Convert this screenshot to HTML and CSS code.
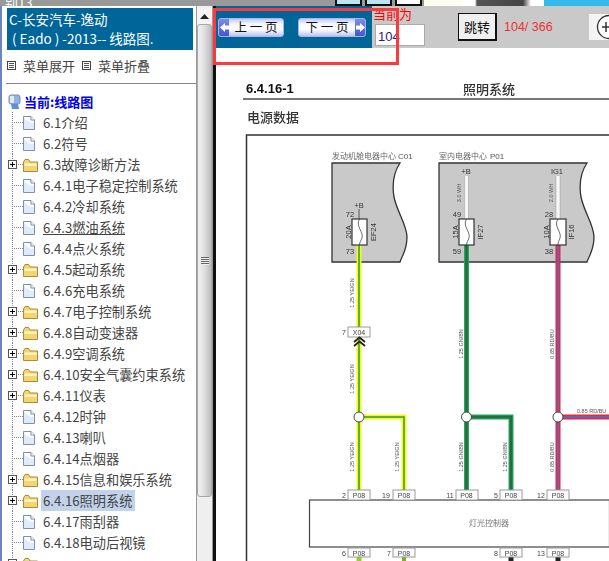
FILE: index.html
```html
<!DOCTYPE html>
<html lang="zh">
<head>
<meta charset="utf-8">
<title>线路图</title>
<link rel="stylesheet" href="styles.css">
</head>
<body>
<svg class="defs" width="0" height="0">
  <symbol id="doc" viewBox="0 0 12 14">
    <path d="M.5.5H8L11.5 4V13.5H.5Z" fill="#dfeafa" stroke="#7f8fae"/>
    <path d="M1 1H7.500V4.500H11V7C7 7 3 5 1 1Z" fill="#fff"/>
    <path d="M8 .5V4H11.500" fill="#fff" stroke="#7f8fae"/>
  </symbol>
  <symbol id="folder" viewBox="0 0 15 13">
    <path d="M.5 3V12.500H14.500V3H7L5.500 .5H2Z" fill="#f4d56f" stroke="#a88b3c"/>
    <path d="M1.500 4.500H13.500V7H1.500Z" fill="#fff3c0"/>
  </symbol>
</svg>

<div class="topstrip">
  <span class="old-title">别13</span>
  <span class="strip-win"></span>
  <span class="strip-win"></span>
  <span class="strip-win strip-win-white"></span>
  <span class="strip-cream"></span>
  <span class="strip-dark"></span>
  <span class="strip-white"></span>
  <span class="strip-cyan"></span>
</div>

<div class="main">
  <aside class="side">
    <div class="side-head">C-长安汽车-逸动<br>&nbsp;( Eado ) -2013-- 线路图.</div>
    <div class="menu-actions">
      <span class="action"><i class="action-box"></i>菜单展开</span>
      <span class="action"><i class="action-box"></i>菜单折叠</span>
    </div>
    <hr class="side-rule">
    <div class="root">
      <svg class="root-icon" width="13" height="16" viewBox="0 0 13 16">
        <rect x="1" y="1" width="11" height="9" rx="2" fill="#8fb4e4" stroke="#7a8fb0"/>
        <path d="M3 10H10L11 15H4Z" fill="#5c8fd6"/>
        <rect x="2" y="2" width="4" height="7" fill="#dfe8f5"/>
      </svg>
      <span>当前:线路图</span>
    </div>
    <ul class="tree">
      <li class="row"><span class="stem"></span><svg class="ic-doc"><use href="#doc"/></svg><span class="label">6.1介绍</span></li>
      <li class="row"><span class="stem"></span><svg class="ic-doc"><use href="#doc"/></svg><span class="label">6.2符号</span></li>
      <li class="row"><span class="stem"><i class="plus"></i></span><svg class="ic-folder"><use href="#folder"/></svg><span class="label">6.3故障诊断方法</span></li>
      <li class="row"><span class="stem"></span><svg class="ic-doc"><use href="#doc"/></svg><span class="label">6.4.1电子稳定控制系统</span></li>
      <li class="row"><span class="stem"></span><svg class="ic-doc"><use href="#doc"/></svg><span class="label">6.4.2冷却系统</span></li>
      <li class="row"><span class="stem"></span><svg class="ic-doc"><use href="#doc"/></svg><span class="label label-hover">6.4.3燃油系统</span></li>
      <li class="row"><span class="stem"></span><svg class="ic-doc"><use href="#doc"/></svg><span class="label">6.4.4点火系统</span></li>
      <li class="row"><span class="stem"><i class="plus"></i></span><svg class="ic-folder"><use href="#folder"/></svg><span class="label">6.4.5起动系统</span></li>
      <li class="row"><span class="stem"></span><svg class="ic-doc"><use href="#doc"/></svg><span class="label">6.4.6充电系统</span></li>
      <li class="row"><span class="stem"><i class="plus"></i></span><svg class="ic-folder"><use href="#folder"/></svg><span class="label">6.4.7电子控制系统</span></li>
      <li class="row"><span class="stem"><i class="plus"></i></span><svg class="ic-folder"><use href="#folder"/></svg><span class="label">6.4.8自动变速器</span></li>
      <li class="row"><span class="stem"><i class="plus"></i></span><svg class="ic-folder"><use href="#folder"/></svg><span class="label">6.4.9空调系统</span></li>
      <li class="row"><span class="stem"><i class="plus"></i></span><svg class="ic-folder"><use href="#folder"/></svg><span class="label">6.4.10安全气囊约束系统</span></li>
      <li class="row"><span class="stem"><i class="plus"></i></span><svg class="ic-folder"><use href="#folder"/></svg><span class="label">6.4.11仪表</span></li>
      <li class="row"><span class="stem"></span><svg class="ic-doc"><use href="#doc"/></svg><span class="label">6.4.12时钟</span></li>
      <li class="row"><span class="stem"></span><svg class="ic-doc"><use href="#doc"/></svg><span class="label">6.4.13喇叭</span></li>
      <li class="row"><span class="stem"></span><svg class="ic-doc"><use href="#doc"/></svg><span class="label">6.4.14点烟器</span></li>
      <li class="row"><span class="stem"><i class="plus"></i></span><svg class="ic-folder"><use href="#folder"/></svg><span class="label">6.4.15信息和娱乐系统</span></li>
      <li class="row"><span class="stem"><i class="plus"></i></span><svg class="ic-folder"><use href="#folder"/></svg><span class="label label-selected">6.4.16照明系统</span></li>
      <li class="row"><span class="stem"></span><svg class="ic-doc"><use href="#doc"/></svg><span class="label">6.4.17雨刮器</span></li>
      <li class="row"><span class="stem"></span><svg class="ic-doc"><use href="#doc"/></svg><span class="label">6.4.18电动后视镜</span></li>
      <li class="row"><span class="stem"><i class="plus"></i></span><svg class="ic-folder"><use href="#folder"/></svg><span class="label"></span></li>
    </ul>
  </aside>

  <div class="scrollbar">
    <div class="sb-up"><svg width="9" height="5" viewBox="0 0 9 5"><path d="M4.500 0L9 5H0Z" fill="#222"/></svg></div>
    <div class="sb-thumb"><i class="sb-grip"></i></div>
  </div>
  <div class="splitter"></div>

  <section class="content">
    <div class="toolbar">
      <div class="nav-zone">
        <button class="page-btn page-prev"><span class="cap cap-left"><svg width="9" height="9" viewBox="0 0 9 9"><path d="M0 4.500L5 0V2.500H9V6.500H5V9Z" fill="#fff"/></svg></span><span class="page-text">上 一 页</span></button>
        <button class="page-btn page-next"><span class="page-text">下 一 页</span><span class="cap cap-right"><svg width="9" height="9" viewBox="0 0 9 9"><path d="M9 4.500L4 0V2.500H0V6.500H4V9Z" fill="#fff"/></svg></span></button>
      </div>
      <div class="tool-rest">
        <div class="page-field">
          <span class="current-label">当前为</span>
          <input class="page-input" value="104">
        </div>
        <button class="jump">跳转</button>
        <span class="page-count">104/ 366</span>
        <span class="zoom-wrap"><svg width="20" height="26" viewBox="0 0 20 26"><circle cx="20" cy="13" r="11.500" fill="#fff" stroke="#333" stroke-width="1.300"/><path d="M13 13H20M17 8V18" stroke="#333" stroke-width="1.500"/></svg></span>
      </div>
    </div>

    <svg class="sheet" viewBox="216 48 393 513" width="393" height="513">
      <text class="h-num" x="246" y="93">6.4.16-1</text>
      <text class="h-cjk" x="463" y="94">照明系统</text>
      <rect x="243" y="98" width="366" height="2" fill="#777"/>
      <text class="h-cjk" x="247" y="122">电源数据</text>

      <path d="M609 135H246.500V561" fill="none" stroke="#333" stroke-width="1.500"/>

      <text class="small-cjk" x="332" y="159">发动机舱电器中心</text>
      <text class="tiny" x="398" y="159">C01</text>
      <text class="small-cjk" x="439" y="159">室内电器中心</text>
      <text class="tiny" x="490" y="159">P01</text>

      <path class="ecu" d="M332 163H400C394 172 392 185 394 197C397 212 407 225 407 237C407 250 402 256 400 262H332Z"/>
      <path class="ecu" d="M439 163H587C581 172 579 185 581 197C584 212 594 225 594 237C594 250 589 256 587 262H439Z"/>

      <g class="lab">
        <path d="M359 209V219" stroke="#555" fill="none"/>
        <text x="359" y="208" text-anchor="middle">+B</text>
        <text x="466" y="174" text-anchor="middle">+B</text>
        <text x="557" y="174" text-anchor="middle">IG1</text>
        <text x="350" y="217" text-anchor="middle">72</text>
        <text x="350" y="254" text-anchor="middle">73</text>
        <text x="457" y="217" text-anchor="middle">49</text>
        <text x="457" y="254" text-anchor="middle">59</text>
        <text x="549" y="217" text-anchor="middle">28</text>
        <text x="549" y="254" text-anchor="middle">38</text>
      </g>

      <!-- wires -->
      <path class="w-white" d="M466.500 176V219"/>
      <path class="w-white-c" d="M466.500 176V219"/>
      <path class="w-white" d="M558 176V219"/>
      <path class="w-white-c" d="M558 176V219"/>

      <path class="w-yellow" d="M359 245V490"/>
      <path class="w-yellow" d="M359 417H404V490"/>
      <path class="w-yg-core" d="M359 245V490"/>
      <path class="w-yg-core" d="M359 417H404V490"/>

      <path class="w-green" d="M466.500 245V490"/>
      <path class="w-green" d="M466.500 417H511V490"/>
      <path class="w-gn-core" d="M466.500 245V490"/>
      <path class="w-gn-core" d="M466.500 417H511V490"/>

      <path class="w-red" d="M558 245V490"/>
      <path class="w-red" d="M558 417H609"/>
      <path class="w-rb-core" d="M558 245V490"/>
      <path class="w-rb-core" d="M558 417H609"/>

      <!-- fuses -->
      <g class="fuse">
        <rect x="352" y="219" width="15" height="26"/>
        <path d="M359.500 219C355 226 364 232 362 238C361 241 359.500 242 359.500 245"/>
        <rect x="459" y="219" width="15" height="26"/>
        <path d="M466.500 219C462 226 471 232 469 238C468 241 466.500 242 466.500 245"/>
        <rect x="550" y="219" width="16" height="26"/>
        <path d="M558 219C553 226 562 232 560 238C559 241 558 242 558 245"/>
      </g>
      <g class="lab">
        <text transform="translate(350.500 232) rotate(-90)" text-anchor="middle">20A</text>
        <text transform="translate(375.500 232) rotate(-90)" text-anchor="middle">EF24</text>
        <text transform="translate(457.500 232) rotate(-90)" text-anchor="middle">15A</text>
        <text transform="translate(482.500 232) rotate(-90)" text-anchor="middle">IF27</text>
        <text transform="translate(548.500 232) rotate(-90)" text-anchor="middle">10A</text>
        <text transform="translate(574 232) rotate(-90)" text-anchor="middle">IF16</text>
      </g>

      <g class="wl">
        <text transform="translate(461 193) rotate(-90)" text-anchor="middle">3.0 WH</text>
        <text transform="translate(553 193) rotate(-90)" text-anchor="middle">2.0 WH</text>
        <text transform="translate(354 293) rotate(-90)" text-anchor="middle">1.25 YE/GN</text>
        <text transform="translate(354 379) rotate(-90)" text-anchor="middle">1.25 YE/GN</text>
        <text transform="translate(463 344) rotate(-90)" text-anchor="middle">1.25 GN/BN</text>
        <text transform="translate(554 344) rotate(-90)" text-anchor="middle">0.85 RD/BU</text>
        <text transform="translate(354 457) rotate(-90)" text-anchor="middle">1.25 YE/GN</text>
        <text transform="translate(399 457) rotate(-90)" text-anchor="middle">1.25 YE/GN</text>
        <text transform="translate(463 457) rotate(-90)" text-anchor="middle">1.25 GN/BN</text>
        <text transform="translate(507 457) rotate(-90)" text-anchor="middle">1.25 GN/BN</text>
        <text transform="translate(554 457) rotate(-90)" text-anchor="middle">0.85 RD/BU</text>
        <text x="577" y="413">0.85 RD/BU</text>
      </g>

      <!-- X04 -->
      <g class="conn">
        <rect x="348" y="327" width="22" height="10"/>
        <text x="359" y="335" text-anchor="middle">X04</text>
        <text x="344" y="335" text-anchor="middle">7</text>
      </g>
      <path d="M354 342L359.500 337.500L365 342M354 346L359.500 341.500L365 346" fill="none" stroke="#222" stroke-width="1.800"/>

      <!-- junctions -->
      <g class="junction">
        <circle cx="359" cy="417" r="5"/>
        <circle cx="466.500" cy="417" r="5"/>
        <circle cx="558" cy="417" r="5"/>
      </g>

      <!-- controller -->
      <rect class="controller" x="309.500" y="500" width="300" height="47"/>
      <text class="small-cjk ctl" x="489" y="526" text-anchor="middle">灯光控制器</text>

      <!-- wires below -->
      <path d="M359 557V561" stroke="#9ccc2a" stroke-width="5"/>
      <path d="M404 557V561" stroke="#7fae20" stroke-width="4"/>
      <path d="M511 557V561" stroke="#222" stroke-width="5"/>
      <path d="M558 557V561" stroke="#222" stroke-width="5"/>

      <!-- connectors -->
      <g class="conn">
        <rect x="348" y="490" width="22" height="10"/><text x="359" y="498" text-anchor="middle">P08</text><text x="344" y="498" text-anchor="middle">2</text>
        <rect x="393" y="490" width="22" height="10"/><text x="404" y="498" text-anchor="middle">P08</text><text x="386" y="498" text-anchor="middle">19</text>
        <rect x="456" y="490" width="22" height="10"/><text x="466.500" y="498" text-anchor="middle">P08</text><text x="450" y="498" text-anchor="middle">11</text>
        <rect x="500" y="490" width="22" height="10"/><text x="511" y="498" text-anchor="middle">P08</text><text x="496" y="498" text-anchor="middle">5</text>
        <rect x="547" y="490" width="22" height="10"/><text x="558" y="498" text-anchor="middle">P08</text><text x="541" y="498" text-anchor="middle">12</text>
        <rect x="348" y="548" width="22" height="9"/><text x="359" y="556" text-anchor="middle">P08</text><text x="344" y="556" text-anchor="middle">6</text>
        <rect x="393" y="548" width="22" height="9"/><text x="404" y="556" text-anchor="middle">P08</text><text x="389" y="556" text-anchor="middle">7</text>
        <rect x="500" y="548" width="22" height="9"/><text x="511" y="556" text-anchor="middle">P08</text><text x="496" y="556" text-anchor="middle">8</text>
        <rect x="547" y="548" width="22" height="9"/><text x="558" y="556" text-anchor="middle">P08</text><text x="541" y="556" text-anchor="middle">13</text>
      </g>
    </svg>
  </section>
</div>

<div class="annotation"></div>
</body>
</html>
```

FILE: styles.css
```css
* { box-sizing: border-box; }
html, body { margin: 0; padding: 0; }
body {
  width: 609px;
  height: 561px;
  overflow: hidden;
  background: #fff;
  position: relative;
  font-family: "Noto Sans CJK SC", "Liberation Sans", sans-serif;
  display: flex;
  flex-direction: column;
}
.defs { position: absolute; }

/* top strip */
.topstrip { display: flex; height: 6px; background: #999; overflow: hidden; flex: none; }
.old-title { width: 335px; height: 6px; overflow: hidden; font-size: 13px; line-height: 6px; color: #fff; padding-left: 5px; white-space: nowrap; flex: none; }
.strip-win { width: 27px; margin-right: 3px; background: #bde4f2; border: 2px solid #111; border-top: 0; flex: none; }
.strip-win-white { background: #fff; margin-right: 0; }
.strip-cream { width: 39px; background: #fdfdf0; flex: none; margin-left: 2px; }
.strip-dark { width: 70px; background: linear-gradient(90deg,#fff 0,#fff 12px,#555 14px,#444 60px,#fff 68px); flex: none; }
.strip-white { width: 11px; background: #fff; flex: none; }
.strip-cyan { flex: 1; background: #33bce8; }

.main { display: flex; flex: 1; min-height: 0; }

/* sidebar */
.side {
  width: 196px;
  flex: none;
  height: 555px;
  overflow: hidden;
  border-left: 2px solid #6c84c0;
  padding-top: 2px;
  background: #fff;
}
.side-head {
  margin-left: 5px;
  width: 186px;
  height: 42px;
  background: #00669a;
  color: #fff;
  font-size: 13.500px;
  line-height: 19px;
  padding: 2px 0 0 2px;
  white-space: nowrap;
}
.menu-actions { display: flex; gap: 7px; margin: 5px 0 0 5px; height: 21px; align-items: center; }
.action { display: inline-flex; align-items: center; gap: 7px; font-size: 13px; color: #444; }
.action-box {
  width: 9px; height: 9px; flex: none;
  border: 1px solid #444;
  background: repeating-linear-gradient(#fff 0, #fff 1px, #555 1px, #555 2px);
  background-clip: content-box;
  padding: 1px;
}
.side-rule { margin: 7px 0 0 4px; width: 190px; border: 0; border-top: 1px solid #888; height: 1px; }
.root { display: flex; align-items: center; height: 21px; margin: 7px 0 0 6px; gap: 3px; font-size: 13px; font-weight: 700; color: #0000f0; }
.root-icon { flex: none; }

.tree { list-style: none; margin: 0; padding: 0; }
.row { display: flex; align-items: center; height: 21px; font-size: 13.200px; color: #444; white-space: nowrap; }
.stem {
  width: 21px; height: 21px; flex: none; display: flex; align-items: center;
  background-image:
    repeating-linear-gradient(#888 0, #888 1px, transparent 1px, transparent 2px),
    repeating-linear-gradient(90deg, #888 0, #888 1px, transparent 1px, transparent 2px);
  background-size: 1px 21px, 11px 1px;
  background-position: 10px 0, 10px 10px;
  background-repeat: no-repeat;
  padding-left: 6px;
}
.plus {
  width: 9px; height: 9px; display: block; background-color: #fff;
  border: 1px solid #555;
  background-image: linear-gradient(#000, #000), linear-gradient(#000, #000);
  background-size: 5px 1px, 1px 5px;
  background-position: center, center;
  background-repeat: no-repeat;
}
.ic-doc { width: 12px; height: 14px; flex: none; margin-right: 8px; }
.ic-folder { width: 15px; height: 13px; flex: none; margin-right: 5px; margin-top: 2px; }
.label { display: block; line-height: 21px; }
.label-hover { text-decoration: underline; }
.label-selected { background: #c1d2ea; margin-left: -2px; padding: 0 3px 0 2px; }

/* scrollbar */
.scrollbar { width: 17px; flex: none; background: #efefef; border-left: 1px solid #999; border-right: 1px solid #999; padding-top: 2px; }
.sb-up { height: 16px; display: flex; align-items: center; justify-content: center; background: #f4f4f4; }
.sb-thumb {
  height: 473px;
  background: linear-gradient(90deg, #f0f0f0, #e2e2e2 45%, #bdbdc0);
  border: 1px solid #a8a8a8;
  border-radius: 3px;
  display: flex;
  align-items: center;
  justify-content: center;
}
.sb-grip { width: 8px; height: 8px; display: block; background: repeating-linear-gradient(#666 0, #666 1px, #eee 1px, #eee 2px); }
.splitter { width: 3px; flex: none; background: #111; }

/* content */
.content { flex: 1; min-width: 0; display: flex; flex-direction: column; background: #fff; overflow: hidden; }
.toolbar { height: 42px; display: flex; flex: none; }
.nav-zone { width: 156px; flex: none; background: #00669a; display: flex; align-items: flex-start; gap: 14px; padding: 12px 0 0 2px; }
.page-btn {
  height: 19px; padding: 0; margin: 0; display: flex; align-items: stretch;
  border: 1px solid #aab4ec; border-radius: 3px;
  background: linear-gradient(#c4caf2, #f6f7ff 30%, #fff 60%, #bcc4f0);
  font: 12.500px "Noto Sans CJK SC", sans-serif; color: #111;
  overflow: hidden;
}
.page-prev { width: 66px; }
.page-next { width: 68px; }
.cap { width: 10px; flex: none; background: linear-gradient(#7f8ce4, #4454d0); display: flex; align-items: center; justify-content: center; }
.page-text { flex: 1; text-align: center; line-height: 16px; white-space: nowrap; }
.tool-rest { flex: 1; background: #c9c9c9; display: flex; align-items: flex-start; min-width: 0; }
.page-field { width: 84px; flex: none; display: flex; flex-direction: column; padding-left: 1px; }
.current-label { color: #f00; font-size: 13px; line-height: 16px; height: 18px; white-space: nowrap; }
.page-input {
  width: 50px; height: 22px; margin-left: 2px; padding: 3px 0 0 2px;
  border: 1px solid #aaa; background: #fff; outline: 0;
  font: 13px "Liberation Sans", sans-serif; color: #2a1a80;
}
.jump {
  width: 39px; height: 28px; margin: 7px 0 0 2px; padding: 0; flex: none;
  background: #f0f0f0; border: 1px solid #111; border-right-width: 2px; border-bottom-width: 2px;
  font: 13px "Noto Sans CJK SC", sans-serif; color: #111;
}
.page-count { margin: 14px 0 0 7px; color: #f03030; font: 12.500px/14px "Liberation Sans", sans-serif; white-space: nowrap; flex: none; }
.zoom-wrap { margin: 8px 0 0 auto; width: 20px; height: 26px; background: #f4f4f4; display: block; flex: none; }
.zoom-wrap svg { display: block; }

/* schematic */
.sheet { display: block; flex: none; filter: blur(.3px); }
.h-num { font: 700 13px "Liberation Sans", sans-serif; fill: #111; }
.h-cjk { font: 500 13px "Noto Sans CJK SC", sans-serif; fill: #333; }
.small-cjk { font: 8px "Liberation Serif", "Noto Sans CJK SC", serif; fill: #666; }
.ctl { fill: #777; }
.tiny { font: 8px "Liberation Sans", sans-serif; fill: #555; }
.ecu { fill: #c9c9c9; stroke: #333; stroke-width: 1.300; }
.lab text { font: 7.500px "Liberation Sans", sans-serif; fill: #333; }
.wl text { font: 5.500px "Liberation Sans", sans-serif; fill: #555; }
.w-white, .w-white-c, .w-yellow, .w-yg-core, .w-green, .w-gn-core, .w-red, .w-rb-core { fill: none; }
.w-white { stroke: #aaa; stroke-width: 5; }
.w-white-c { stroke: #f6f6f6; stroke-width: 3.500; }
.w-yellow { stroke: #f7f71e; stroke-width: 5; }
.w-yg-core { stroke: #2e9a3a; stroke-width: 1.500; }
.w-green { stroke: #1eaa60; stroke-width: 5; }
.w-gn-core { stroke: #2a6a40; stroke-width: 2.500; }
.w-red { stroke: #f5203a; stroke-width: 5; }
.w-rb-core { stroke: #5a6ab0; stroke-width: 2; }
.fuse rect { fill: #fff; stroke: #333; stroke-width: 1.200; }
.fuse path { fill: none; stroke: #444; stroke-width: .8; }
.conn rect { fill: #fff; stroke: #999; stroke-width: 1; }
.conn text { font: 7px "Liberation Sans", sans-serif; fill: #444; }
.junction circle { fill: #fff; stroke: #444; stroke-width: 1; }
.controller { fill: #fff; stroke: #444; stroke-width: 1.200; }

/* hand-drawn red box over the page */
.annotation { position: absolute; left: 213px; top: 8px; width: 186px; height: 57px; border: 3px solid #fb3a3e; pointer-events: none; }
```
